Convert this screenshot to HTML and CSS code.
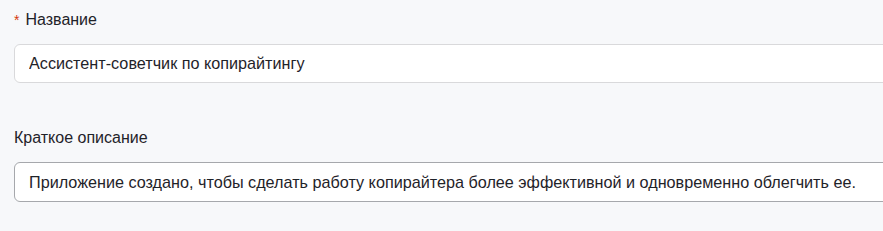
FILE: index.html
```html
<!DOCTYPE html>
<html lang="ru">
<head>
  <meta charset="UTF-8">
  <title>Форма приложения</title>
  <link rel="stylesheet" href="styles.css">
</head>
<body>
  <form class="app-form">
    <div class="field">
      <label class="field-label"><span class="required">*</span>Название</label>
      <input class="field-input" type="text" value="Ассистент-советчик по копирайтингу">
    </div>
    <div class="field">
      <label class="field-label">Краткое описание</label>
      <input class="field-input field-input-hover" type="text" value="Приложение создано, чтобы сделать работу копирайтера более эффективной и одновременно облегчить ее.">
    </div>
  </form>
</body>
</html>
```

FILE: styles.css
```css
body {
  margin: 0;
  background: #f7f8fa;
  font-family: 'Liberation Sans', Arial, sans-serif;
  color: #1f2329;
  overflow: hidden;
}

.app-form {
  padding: 10px 0 0 14px;
  display: flex;
  flex-direction: column;
  gap: 45px;
}

.field {
  display: flex;
  flex-direction: column;
}

.field-label {
  font-size: 16px;
  line-height: 20px;
  margin-bottom: 14px;
}

.required {
  color: #d4380d;
  font-size: 14px;
  margin-right: 6px;
}

.field-input {
  width: 900px;
  height: 39px;
  box-sizing: border-box;
  border: 1px solid #d9d9db;
  border-radius: 6px;
  background: #fff;
  padding: 0 14px;
  font-family: inherit;
  font-size: 16.2px;
  color: #1f2329;
  outline: none;
}

.field-input-hover {
  border-color: #a6a8ac;
  height: 40px;
}
```
